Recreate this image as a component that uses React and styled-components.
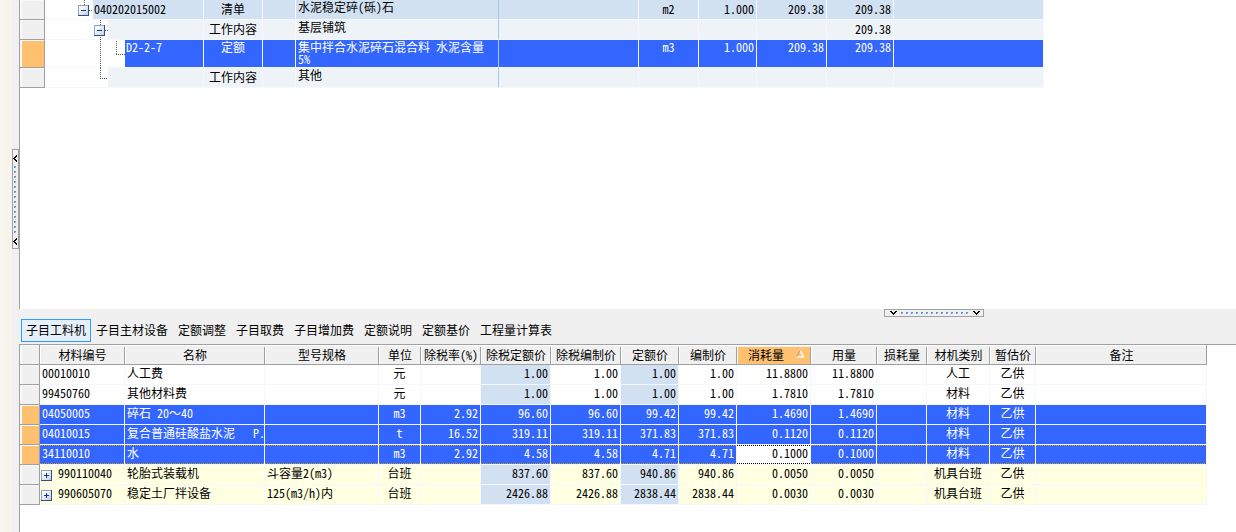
import React, { useState } from 'react';
import styled, { createGlobalStyle, css } from 'styled-components';

const tabs = ['子目工料机', '子目主材设备', '定额调整', '子目取费', '子目增加费', '定额说明', '定额基价', '工程量计算表'];

const itemWidths = [25, 159, 59, 33, 203, 140, 60, 58, 70, 67];

const items = [
  { id: 'r1', level: 1, code: '040202015002', type: '清单', name: '水泥稳定碎(砾)石', unit: 'm2', qty: '1.000', price: '209.38', total: '209.38', tone: 'section' },
  { id: 'r2', level: 2, code: '', type: '工作内容', name: '基层铺筑', unit: '', qty: '', price: '', total: '209.38', tone: 'work' },
  { id: 'r3', level: 3, code: 'D2-2-7', type: '定额', name: '集中拌合水泥碎石混合料 水泥含量 5%', unit: 'm3', qty: '1.000', price: '209.38', total: '209.38', tone: 'selected' },
  { id: 'r4', level: 4, code: '', type: '工作内容', name: '其他', unit: '', qty: '', price: '', total: '', tone: 'work' },
];

const columns = [
  { key: 'code', title: '材料编号', width: 85 },
  { key: 'name', title: '名称', width: 140 },
  { key: 'spec', title: '型号规格', width: 114 },
  { key: 'unit', title: '单位', width: 42, align: 'center' },
  { key: 'tax', title: '除税率(%)', width: 60, align: 'right' },
  { key: 'netQuota', title: '除税定额价', width: 70, align: 'right', locked: true },
  { key: 'netPrice', title: '除税编制价', width: 70, align: 'right' },
  { key: 'quota', title: '定额价', width: 58, align: 'right', locked: true },
  { key: 'price', title: '编制价', width: 58, align: 'right' },
  { key: 'usage', title: '消耗量', width: 74, align: 'right', sorted: true },
  { key: 'amount', title: '用量', width: 66, align: 'right' },
  { key: 'loss', title: '损耗量', width: 50, align: 'right' },
  { key: 'kind', title: '材机类别', width: 63, align: 'center' },
  { key: 'supply', title: '暂估价', width: 46, align: 'center' },
  { key: 'remark', title: '备注' },
];

const materials = [
  { code: '00010010', name: '人工费', unit: '元', netQuota: '1.00', netPrice: '1.00', quota: '1.00', price: '1.00', usage: '11.8800', amount: '11.8800', kind: '人工', supply: '乙供' },
  { code: '99450760', name: '其他材料费', unit: '元', netQuota: '1.00', netPrice: '1.00', quota: '1.00', price: '1.00', usage: '1.7810', amount: '1.7810', kind: '材料', supply: '乙供' },
  { code: '04050005', name: '碎石 20～40', unit: 'm3', tax: '2.92', netQuota: '96.60', netPrice: '96.60', quota: '99.42', price: '99.42', usage: '1.4690', amount: '1.4690', kind: '材料', supply: '乙供', tone: 'selected' },
  { code: '04010015', name: '复合普通硅酸盐水泥   P.', unit: 't', tax: '16.52', netQuota: '319.11', netPrice: '319.11', quota: '371.83', price: '371.83', usage: '0.1120', amount: '0.1120', kind: '材料', supply: '乙供', tone: 'selected' },
  { code: '34110010', name: '水', unit: 'm3', tax: '2.92', netQuota: '4.58', netPrice: '4.58', quota: '4.71', price: '4.71', usage: '0.1000', amount: '0.1000', kind: '材料', supply: '乙供', tone: 'selected', focused: true },
  { code: '990110040', name: '轮胎式装载机', spec: '斗容量2(m3)', unit: '台班', netQuota: '837.60', netPrice: '837.60', quota: '940.86', price: '940.86', usage: '0.0050', amount: '0.0050', kind: '机具台班', supply: '乙供', tone: 'machine' },
  { code: '990605070', name: '稳定土厂拌设备', spec: '125(m3/h)内', unit: '台班', netQuota: '2426.88', netPrice: '2426.88', quota: '2838.44', price: '2838.44', usage: '0.0030', amount: '0.0030', kind: '机具台班', supply: '乙供', tone: 'machine' },
];

const tones = {
  plain: '#ffffff',
  section: '#d2e1f2',
  work: '#eef3f8',
  selected: '#3366ff',
  machine: '#ffffe1',
};

// Dotted guides per tree row, as [x1, y1, x2, y2]
const guides = {
  1: { width: 48, height: 19, lines: [[39, 0, 39, 5], [44, 10, 48, 10]], box: [33, 5] },
  2: { width: 63, height: 20, lines: [[55, 0, 55, 5], [60, 10, 63, 10], [55, 17, 55, 20]], box: [49, 5] },
  3: { width: 80, height: 28, lines: [[55, 1, 55, 28], [71, 1, 71, 14], [71, 14, 80, 14]] },
  4: { width: 63, height: 19, lines: [[55, 0, 55, 10], [55, 10, 63, 10]] },
};

function Toggle({ open, label }) {
  return (
    <ToggleBtn type="button" aria-label={label} aria-expanded={open}>
      <svg width="11" height="11" shapeRendering="crispEdges">
        <path d="M3 5.5H8" stroke="#20386a" />
        {!open && <path d="M5.5 3V8" stroke="#20386a" />}
      </svg>
    </ToggleBtn>
  );
}

function TreeGuide({ level }) {
  const { width, height, lines, box } = guides[level];
  return (
    <Guide $width={width}>
      <svg width={width} height={height} shapeRendering="crispEdges">
        {lines.map(([x1, y1, x2, y2]) => (
          <path
            key={`${x1}-${y1}-${x2}`}
            d={x1 === x2 ? `M${x1 + 0.5} ${y1}V${y2}` : `M${x1} ${y1 + 0.5}H${x2}`}
            stroke="#606060"
            strokeDasharray="1 1"
          />
        ))}
      </svg>
      {box && (
        <GuideToggle $left={box[0]} $top={box[1]}>
          <Toggle open label="折叠" />
        </GuideToggle>
      )}
    </Guide>
  );
}

const gripDots = Array.from({ length: 14 }, (_, i) => 16 + i * 5);

function Grip({ vertical }) {
  if (vertical) {
    return (
      <svg width="5" height="98" shapeRendering="crispEdges">
        {[5, 88].map((y) => (
          <path key={y} transform={`translate(0 ${y})`} d="M4 0V2H3V3H2V4H3V5H4V7H3V6H2V5H1V4H0V3H1V2H2V1H3V0Z" />
        ))}
        {gripDots.map((y) => (
          <g key={y}>
            <rect x="1" y={y} width="2" height="2" fill="#a6c6ee" />
            <path d={`M1 ${y}h2v1h-1v1h-1z`} fill="#5a90dc" />
          </g>
        ))}
      </svg>
    );
  }
  return (
    <svg width="98" height="6" shapeRendering="crispEdges">
      {[5, 88].map((x) => (
        <path key={x} transform={`translate(${x} 1)`} d="M0 0H2V1H3V2H4V1H5V0H7V1H6V2H5V3H4V4H3V3H2V2H1V1H0Z" />
      ))}
      {gripDots.map((x) => (
        <g key={x}>
          <rect x={x} y="2" width="2" height="2" fill="#a6c6ee" />
          <path d={`M${x} 2h2v1h-1v1h-1z`} fill="#5a90dc" />
        </g>
      ))}
    </svg>
  );
}

function ItemTable() {
  return (
    <Table>
      <colgroup>
        {itemWidths.map((w, i) => <Col key={i} $width={w} />)}
        <col />
      </colgroup>
      <tbody>
        {items.map((row) => (
          <ItemRow key={row.id} $tone={row.tone}>
            <RowMark $active={row.tone === 'selected'} />
            <TreeCell>
              <TreeBox>
                <TreeGuide level={row.level} />
                <TreeLabel $tone={row.tone}>{row.code}</TreeLabel>
              </TreeBox>
            </TreeCell>
            <ItemCell $align="center">{row.type}</ItemCell>
            <ItemCell />
            <NameCell>{row.name}</NameCell>
            <ItemCell />
            <ItemCell $align="center">{row.unit}</ItemCell>
            <ItemCell $align="right">{row.qty}</ItemCell>
            <ItemCell $align="right">{row.price}</ItemCell>
            <ItemCell $align="right">{row.total}</ItemCell>
            <ItemCell />
          </ItemRow>
        ))}
      </tbody>
    </Table>
  );
}

function MaterialTable() {
  return (
    <Table>
      <colgroup>
        <Col $width={20} />
        {columns.map((c) => (c.width ? <Col key={c.key} $width={c.width} /> : <col key={c.key} />))}
      </colgroup>
      <thead>
        <tr>
          <RowMark as="th" />
          {columns.map((c) => (
            <HeadCell key={c.key} scope="col" $last={c.key === 'remark'} aria-sort={c.sorted ? 'ascending' : undefined}>
              <HeadBtn type="button" $sorted={c.sorted}>
                {c.title}
                {c.sorted && (
                  <svg width="8" height="8" viewBox="0 0 8 8">
                    <path d="M4 0.500L7.500 7H0.500" fill="none" stroke="#fff" strokeWidth="1.500" />
                    <path d="M4 0.500L0.500 7" stroke="#a0a0a0" />
                  </svg>
                )}
              </HeadBtn>
            </HeadCell>
          ))}
        </tr>
      </thead>
      <tbody>
        {materials.map((row) => (
          <MaterialRow key={row.code} $tone={row.tone || 'plain'}>
            <RowMark $active={row.tone === 'selected'} />
            {columns.map((c) => (
              <Cell
                key={c.key}
                $align={c.align}
                $locked={c.locked && row.tone !== 'selected'}
                $focusRow={row.focused}
                $editing={row.focused && c.sorted}
              >
                {c.key === 'code' && row.tone === 'machine' ? (
                  <CodeBox>
                    <Toggle open={false} label="展开" />
                    {row.code}
                  </CodeBox>
                ) : (
                  row[c.key]
                )}
              </Cell>
            ))}
          </MaterialRow>
        ))}
      </tbody>
    </Table>
  );
}

function App() {
  const [active, setActive] = useState(0);

  return (
    <>
      <GlobalStyle />
      <Page>
        <Margin />
        <SideSplitter>
          <SideHandle type="button" aria-label="折叠左侧面板">
            <Grip vertical />
          </SideHandle>
        </SideSplitter>
        <Main>
          <ItemPane>
            <ItemTable />
          </ItemPane>
          <PaneSplitter>
            <PaneHandle type="button" aria-label="折叠下方面板">
              <Grip />
            </PaneHandle>
          </PaneSplitter>
          <TabBar role="tablist">
            {tabs.map((tab, i) => (
              <Tab key={tab} type="button" role="tab" aria-selected={i === active} $active={i === active} onClick={() => setActive(i)}>
                {tab}
              </Tab>
            ))}
          </TabBar>
          <MaterialPane>
            <MaterialTable />
          </MaterialPane>
        </Main>
      </Page>
    </>
  );
}

// ========== Styled Components ==========

const GlobalStyle = createGlobalStyle`
  * {
    box-sizing: border-box;
  }
  body {
    margin: 0;
    background: #f0f0f0;
    color: #000;
    font-family: 'Noto Sans Mono CJK SC', 'Noto Sans CJK SC', 'Liberation Mono', monospace;
    font-size: 12px;
  }
  button {
    font: inherit;
    color: inherit;
    margin: 0;
    padding: 0;
    border: none;
    background: none;
  }
  svg {
    display: block;
  }
`;

const Page = styled.div`
  display: flex;
  min-height: 100vh;
`;

const Margin = styled.div`
  flex: 0 0 12px;
  background: linear-gradient(90deg, #f9f5ef, #f5f3ec);
`;

const SideSplitter = styled.div`
  flex: 0 0 7px;
  padding-top: 149px;
  background: #f0f0f0;
`;

const SideHandle = styled.button`
  display: block;
  width: 7px;
  height: 100px;
  border: 1px solid #a0a0a0;
`;

const Main = styled.main`
  flex: 1;
  min-width: 0;
  display: flex;
  flex-direction: column;
`;

const ItemPane = styled.section`
  min-height: 309px;
  padding-right: 192px;
  border-left: 1px solid #a0a0a0;
  background: #fff;
`;

const PaneSplitter = styled.div`
  display: flex;
  justify-content: flex-end;
  padding-right: 252px;
`;

const PaneHandle = styled.button`
  width: 100px;
  height: 8px;
  border: 1px solid #a0a0a0;
`;

const TabBar = styled.div`
  display: flex;
  padding: 2px;
`;

const Tab = styled.button`
  height: 23px;
  padding: 0 4px 2px;
  line-height: 19px;
  white-space: nowrap;
  border: 1px solid ${(p) => (p.$active ? '#3399ff' : 'transparent')};
  background: ${(p) => (p.$active ? '#e5f0fb' : 'transparent')};
`;

const MaterialPane = styled.section`
  flex: 1;
  padding-right: 29px;
  border-top: 1px solid #a0a0a0;
  border-left: 1px solid #a0a0a0;
  background: #fff;
`;

const Table = styled.table`
  width: 100%;
  table-layout: fixed;
  border-collapse: separate;
  border-spacing: 0;
`;

const Col = styled.col`
  width: ${(p) => p.$width}px;
`;

const RowMark = styled.td`
  padding: 0;
  border-right: 1px solid #a0a0a0;
  border-bottom: 1px solid #a0a0a0;
  background: ${(p) => (p.$active ? '#ffc070' : '#f0f0f0')};
  box-shadow: inset 2px 1px #f8f8f8;
`;

const ItemRow = styled.tr`
  height: 20px;
  background: ${(p) => tones[p.$tone]};
  color: ${(p) => (p.$tone === 'selected' ? '#fff' : '#000')};
  --cell-top: ${(p) => (p.$tone === 'selected' ? '1px' : '3px')};
`;

const gridLines = css`
  border-right: 1px solid #f4f7fd;
  border-bottom: 1px solid #f4f7fd;
`;

const ItemCell = styled.td`
  ${gridLines}
  padding: var(--cell-top) 2px 0;
  line-height: 12px;
  vertical-align: top;
  text-align: ${(p) => p.$align || 'left'};
`;

const NameCell = styled(ItemCell)`
  padding: 1px 2px 2px;
  border-right-color: #a3c8ee;
`;

const TreeCell = styled.td`
  ${gridLines}
  height: 1px;
  padding: 0;
  background: #fff;
  vertical-align: top;
`;

const TreeBox = styled.div`
  display: flex;
  height: 100%;
`;

const Guide = styled.div`
  flex: 0 0 ${(p) => p.$width}px;
  display: grid;
  align-items: start;
  height: 19px;

  & > * {
    grid-area: 1 / 1;
  }
`;

const GuideToggle = styled.div`
  padding: ${(p) => p.$top}px 0 0 ${(p) => p.$left}px;
`;

const ToggleBtn = styled.button`
  flex: none;
  display: block;
  width: 11px;
  height: 11px;
  background: linear-gradient(135deg, #fff 20%, #b4c8e8);
  box-shadow: inset -1px -1px #35507f, inset 1px 1px #8ba3cb;
`;

const TreeLabel = styled.div`
  flex: 1;
  padding: var(--cell-top) 1px 0;
  line-height: 12px;
  background: ${(p) => tones[p.$tone]};
`;

const HeadCell = styled.th`
  height: 20px;
  padding: 1px 0 0;
  border-bottom: 1px solid #a0a0a0;
  border-right: ${(p) => (p.$last ? '1px solid #a0a0a0' : 'none')};
  background: #f0f0f0;
  box-shadow: inset 0 1px #fff;
  font-weight: normal;
`;

const HeadBtn = styled.button`
  display: flex;
  align-items: center;
  justify-content: center;
  gap: 12px;
  width: 100%;
  height: 17px;
  padding: 0 0 2px ${(p) => (p.$sorted ? '4px' : '0')};
  line-height: 15px;
  white-space: nowrap;
  border-left: 1px solid #fff;
  border-right: 1px solid #a0a0a0;
  background: ${(p) => (p.$sorted ? '#ffc070' : 'transparent')};

  ${HeadCell}:last-child & {
    border-right: none;
  }
`;

const MaterialRow = styled.tr`
  height: 20px;
  background: ${(p) => tones[p.$tone]};
  color: ${(p) => (p.$tone === 'selected' ? '#fff' : '#000')};
`;

const dots = (color) => css`
  background-image:
    repeating-linear-gradient(90deg, ${color} 0 1px, transparent 1px 2px),
    repeating-linear-gradient(90deg, ${color} 0 1px, transparent 1px 2px);
  background-size: 100% 1px;
  background-position: top, bottom;
  background-repeat: no-repeat;
  background-origin: padding-box;
  background-clip: padding-box;
`;

const Cell = styled.td`
  ${gridLines}
  height: 20px;
  padding: 0 2px;
  line-height: 15px;
  vertical-align: top;
  white-space: pre;
  overflow: hidden;
  text-align: ${(p) => p.$align || 'left'};
  ${(p) => p.$locked && 'background-color: #d2e1f2;'}
  ${(p) => p.$focusRow && dots(p.$editing ? '#000' : '#cc9900')}
  ${(p) => p.$editing && 'background-color: #fff; color: #000;'}
`;

const CodeBox = styled.div`
  display: flex;
  align-items: flex-start;
  gap: 6px;
  margin-left: -1px;

  ${ToggleBtn} {
    margin-top: 5px;
  }
`;

export default App;
